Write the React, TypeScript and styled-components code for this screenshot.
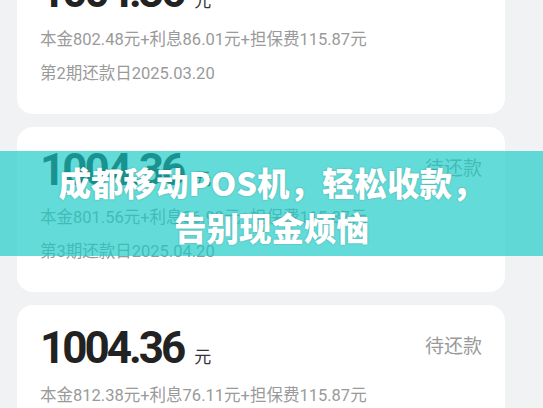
import styled, { createGlobalStyle } from 'styled-components';

const GlobalStyle = createGlobalStyle`
  html, body {
    margin: 0;
    padding: 0;
    background: #f1f2f4;
  }
  * {
    box-sizing: border-box;
  }
`;

const Screen = styled.div`
  position: relative;
  width: 543px;
  height: 408px;
  overflow: hidden;
  background: #f1f2f4;
  font-family: Roboto, "Noto Sans CJK SC", sans-serif;
`;

const BillList = styled.div`
  display: flex;
  flex-direction: column;
  gap: 13px;
  width: 488px;
  margin: -51px 0 0 17px;
`;

const Card = styled.div`
  display: flex;
  flex-direction: column;
  height: 165px;
  padding: 21px 23px 0;
  background: #ffffff;
  border-radius: 16px;
`;

const TopRow = styled.div`
  display: flex;
  align-items: center;
  justify-content: space-between;
  height: 44px;
`;

const Amount = styled.div`
  display: flex;
  align-items: baseline;
  gap: 11px;
`;

const Number = styled.span`
  font-size: 44px;
  line-height: 44px;
  font-weight: 700;
  letter-spacing: -3px;
  color: #222222;
`;

const Unit = styled.span`
  font-family: "Noto Sans CJK SC", sans-serif;
  font-size: 17px;
  color: #333333;
`;

const Status = styled.span`
  margin-bottom: 7px;
  font-family: "Noto Sans CJK SC", sans-serif;
  font-size: 19px;
  color: #9a9a9a;
`;

const Detail = styled.div<{ $first?: boolean }>`
  margin-top: ${(p) => (p.$first ? '14px' : '10px')};
  font-size: 16.5px;
  line-height: 24px;
  color: #9a9a9a;
`;

const Banner = styled.div`
  position: absolute;
  left: 0;
  right: 0;
  top: 151px;
  height: 105px;
  display: flex;
  align-items: center;
  justify-content: center;
  background: rgba(22, 203, 198, 0.67);
`;

const Headline = styled.h1`
  margin: 0;
  font-family: "Noto Sans CJK SC", sans-serif;
  font-weight: 900;
  font-size: 32.5px;
  line-height: 45px;
  color: #ffffff;
  text-align: center;
  text-shadow: 0 0 2px rgba(0, 60, 60, 0.35);
`;

const bills = [
  { principal: '802.48', interest: '86.01', fee: '115.87', period: 2, date: '2025.03.20' },
  { principal: '801.56', interest: '86.93', fee: '115.87', period: 3, date: '2025.04.20' },
  { principal: '812.38', interest: '76.11', fee: '115.87', period: 4, date: '2025.05.20' },
];

export default function App() {
  return (
    <Screen>
      <GlobalStyle />
      <BillList>
        {bills.map((b) => (
          <Card key={b.period}>
            <TopRow>
              <Amount>
                <Number>1004.36</Number>
                <Unit>元</Unit>
              </Amount>
              <Status>待还款</Status>
            </TopRow>
            <Detail $first>
              本金{b.principal}元+利息{b.interest}元+担保费{b.fee}元
            </Detail>
            <Detail>
              第{b.period}期还款日{b.date}
            </Detail>
          </Card>
        ))}
      </BillList>
      <Banner>
        <Headline>
          成都移动POS机，轻松收款，
          <br />
          告别现金烦恼
        </Headline>
      </Banner>
    </Screen>
  );
}
